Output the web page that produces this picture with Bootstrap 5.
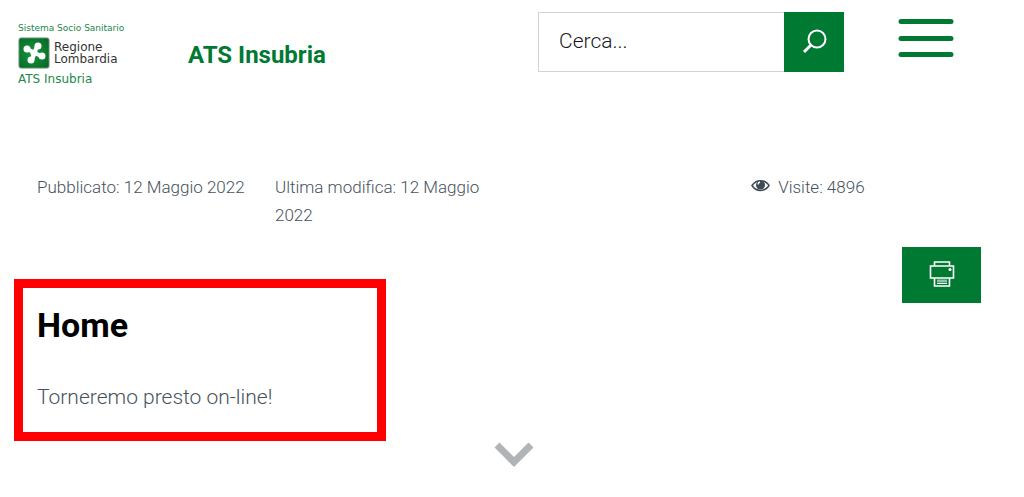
<!DOCTYPE html>
<html lang="it">
<head>
<meta charset="utf-8">
<meta name="viewport" content="width=device-width, initial-scale=1">
<title>ATS Insubria - Home</title>
<link href="https://cdn.jsdelivr.net/npm/bootstrap@5.3.0/dist/css/bootstrap.min.css" rel="stylesheet">
<style>
  :root { --ats-green: #007a33; --ats-text: #46525c; }
  body { font-family: Roboto, "Liberation Sans", sans-serif; font-weight: 300; color: var(--ats-text); background: #fff; }
  a { text-decoration: none; }
  .site-header { padding: 12px 70px 0 18px; }
  .brand-logo { width: 110px; height: 64px; margin-top: 10px; }
  .brand-title { margin: 28px 0 0 60px; font-size: 24px; line-height: 30px; font-weight: 700; color: var(--ats-green); white-space: nowrap; }
  .brand-logo text { font-family: "DejaVu Sans", sans-serif; font-weight: 400; }
  .site-search { width: 306px; height: 60px; margin-right: 54px; }
  .site-search .form-control { border: 1px solid #d2d3d3; border-right: 0; padding: 0 20px; font-size: 21px; font-weight: 300; color: #17191c; }
  .site-search .form-control::placeholder { color: #17191c; opacity: 1; }
  .site-search .btn { width: 60px; }
  .btn-ats, .btn-ats:hover { background: var(--ats-green); color: #fff; border: 0; padding: 0; }
  .burger { margin-top: 7px; color: var(--ats-green); }
  .meta { padding: 0 47px 0 25px; margin-top: 87px; font-size: 17px; line-height: 28px; }
  .content { padding: 18px 43px 0 14px; }
  .notice { width: 372px; margin-top: 32px; border: 9px solid #f00; padding: 17px 14px; }
  .notice h1 { margin: 0 0 34px; font-size: 34px; line-height: 40px; font-weight: 700; color: #000; }
  .notice p { margin: 0; font-size: 21px; line-height: 36px; }
  .btn-print { width: 79px; height: 56px; }
</style>
</head>
<body>
<header class="site-header d-flex align-items-start">
  <a href="#" class="flex-shrink-0" aria-label="Regione Lombardia - ATS Insubria">
    <svg class="brand-logo d-block" viewBox="0 0 110 64">
      <defs><radialGradient id="tile" cx=".45" cy=".5" r=".7"><stop offset="0" stop-color="#159a3e"/><stop offset="1" stop-color="#086526"/></radialGradient></defs>
      <text x="0" y="9" font-size="9" fill="#23874a">Sistema Socio Sanitario</text>
      <rect x="1" y="16" width="30" height="30" rx="2" fill="url(#tile)" stroke="#5f8f6a"/>
      <g fill="#fff">
        <path d="M9 27L23 34M19 24L14 38" stroke="#fff" stroke-width="4"/>
        <circle cx="9" cy="27" r="3.500"/><circle cx="20" cy="24" r="3.500"/><circle cx="24" cy="34" r="3.500"/><circle cx="13" cy="38" r="3.500"/><circle cx="16" cy="31" r="3.500"/>
      </g>
      <text x="36" y="29" font-size="12" fill="#333">Regione</text>
      <text x="36" y="41" font-size="12" fill="#333">Lombardia</text>
      <text x="0" y="61" font-size="12" fill="#23874a">ATS Insubria</text>
    </svg>
  </a>
  <a href="#" class="brand-title">ATS Insubria</a>
  <form class="site-search input-group flex-nowrap ms-auto flex-shrink-0" role="search">
    <input type="search" class="form-control rounded-0" placeholder="Cerca..." aria-label="Cerca">
    <button type="button" class="btn btn-ats rounded-0" aria-label="Avvia la ricerca">
      <svg width="26" height="26" viewBox="0 0 26 26" fill="none" stroke="#fff" stroke-width="2"><circle cx="16" cy="10" r="8.500"/><path d="M10 16l-7 7" stroke-width="3"/></svg>
    </button>
  </form>
  <button type="button" class="burger btn p-0 border-0 flex-shrink-0" aria-label="Apri il menu">
    <svg class="d-block" width="56" height="38" viewBox="0 0 56 38" stroke="currentColor" stroke-width="5" stroke-linecap="round"><path d="M3 2.500h50M3 19.500h50M3 35.500h50"/></svg>
  </button>
</header>
<main>
  <div class="meta">
    <div class="row mx-0">
      <div class="col-3 text-nowrap">Pubblicato: 12 Maggio 2022</div>
      <div class="col-3">Ultima modifica: 12 Maggio 2022</div>
      <div class="col-3 offset-3">
        <svg class="me-1 align-baseline" width="19" height="14" viewBox="0 0 19 14" aria-hidden="true"><path d="M1 6.500c4-6.500 13-6.500 17 0c-4 6.500-13 6.500-17 0z" fill="#fff" stroke="#3f4a54" stroke-width="1.500"/><circle cx="9.500" cy="6" r="4.500" fill="#3f4a54"/><path d="M7 5.500q0-2 2-2.500" stroke="#fff" stroke-width="1.300" fill="none"/></svg>
        Visite: 4896
      </div>
    </div>
  </div>
  <div class="content d-flex justify-content-between align-items-start">
    <section class="notice">
      <h1>Home</h1>
      <p>Torneremo presto on-line!</p>
    </section>
    <button type="button" class="btn btn-ats btn-print rounded-0" aria-label="Stampa">
      <svg class="d-block mx-auto" width="26" height="30" viewBox="0 0 26 30" fill="none" stroke="#fff" stroke-width="1.600"><path d="M5.500 6V2h15v4M5.500 18h-4V6h23v12h-4M5.500 18h15v8h-15z"/><path d="M8 19.500h10v3H8z" fill="#8fc2a3" stroke="none"/><path d="M8 23.500h10" stroke-width="1"/><circle cx="21" cy="9.500" r="1.500" fill="#fff" stroke="none"/></svg>
    </button>
  </div>
  <a href="#" class="d-block text-center" aria-label="Scorri in basso">
    <svg class="d-inline-block align-top" width="42" height="26" viewBox="0 0 42 26" fill="none" stroke="#b0b4b7" stroke-width="7"><path d="M6 4l17 17L40 4"/></svg>
  </a>
</main>
<script src="https://cdn.jsdelivr.net/npm/bootstrap@5.3.0/dist/js/bootstrap.bundle.min.js"></script>
</body>
</html>
